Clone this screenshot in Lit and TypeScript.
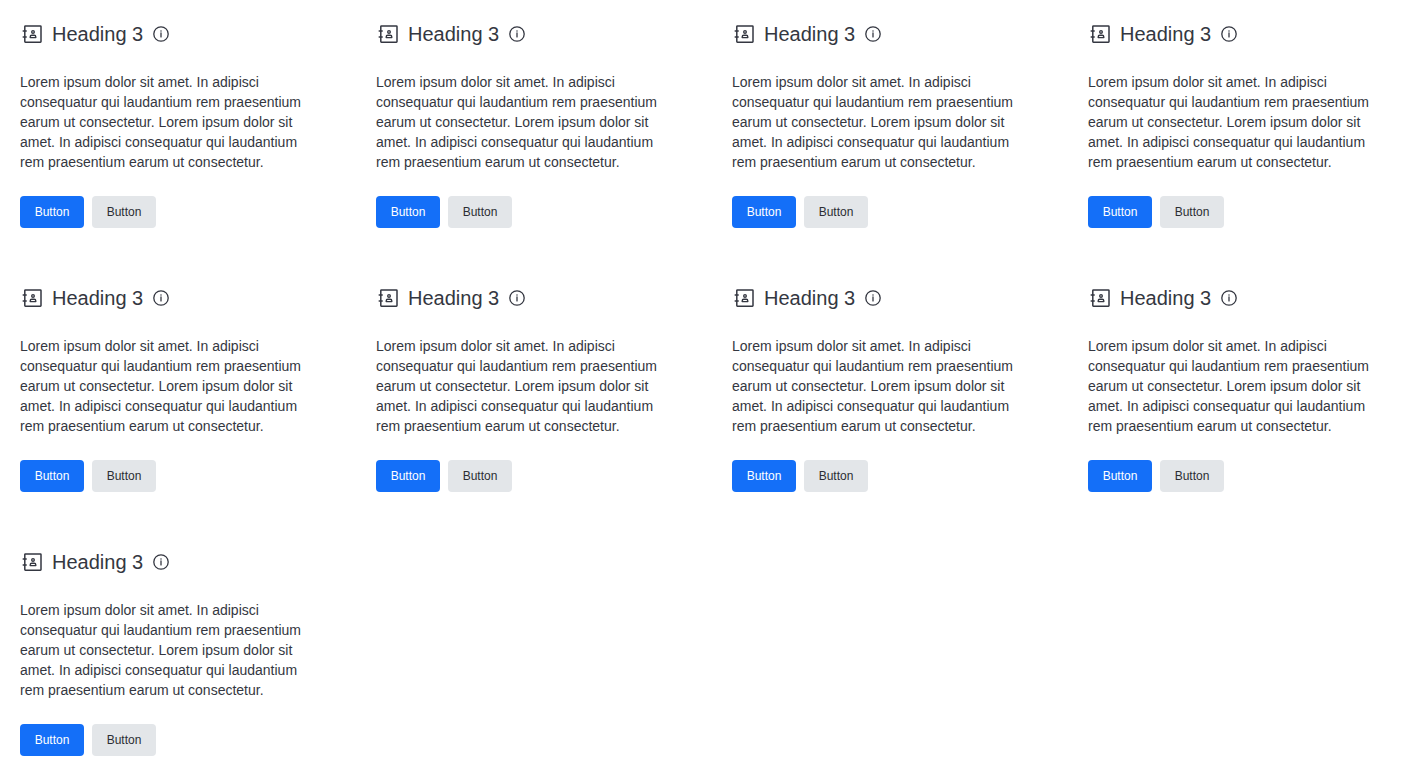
import { LitElement, html, css } from "lit";
import { customElement, property } from "lit/decorators.js";

const FONT = css`"Liberation Sans", Arial, sans-serif`;

@customElement("info-card")
export class InfoCard extends LitElement {
  static styles = css`
    :host {
      display: flex;
      flex-direction: column;
      gap: 24px;
      padding: 20px;
      color: #343741;
      font-family: ${FONT};
    }
    .header {
      display: flex;
      align-items: center;
      gap: 8px;
    }
    .icon {
      display: block;
      flex: none;
      fill: none;
      stroke: currentColor;
      stroke-linecap: round;
      stroke-linejoin: round;
    }
    .title {
      margin: 0;
      font-size: 20px;
      line-height: 28px;
      font-weight: 400;
    }
    .info {
      padding: 0;
      border: 0;
      background: none;
      color: inherit;
      cursor: pointer;
    }
    .text {
      margin: 0;
      font-size: 14px;
      line-height: 20px;
    }
    .actions {
      display: flex;
      gap: 8px;
    }
    .button {
      height: 32px;
      min-width: 64px;
      padding: 0 12px;
      border: 0;
      border-radius: 4px;
      background: #e3e6e9;
      color: #2b2d33;
      font-family: inherit;
      font-size: 12px;
      line-height: 16px;
      cursor: pointer;
    }
    .primary {
      background: #146ff8;
      color: #fff;
    }
  `;

  @property() heading = "";
  @property() text = "";

  render() {
    return html`
      <div class="header">
        <svg class="icon" width="24" height="24" viewBox="0 0 24 24" stroke-width="1.5" aria-hidden="true">
          <rect x="4.8" y="4" width="16.2" height="16.2" rx="0.6" />
          <path d="M3.2 9h3M3.2 15h3" />
          <circle cx="13" cy="9.9" r="1.3" stroke-width="1.4" />
          <path d="M10.2 15.6v-.7c0-1 .7-1.7 1.6-1.7h2.4c.9 0 1.6.7 1.6 1.7v.7z" stroke-width="1.4" />
        </svg>
        <h3 class="title">${this.heading}</h3>
        <button class="info" type="button" aria-label="More information">
          <svg class="icon" width="20" height="20" viewBox="0 0 20 20" stroke-width="1.3">
            <circle cx="10" cy="10" r="7.2" />
            <path d="M10 8.9v4" />
            <circle cx="10" cy="6.9" r="0.75" fill="currentColor" stroke="none" />
          </svg>
        </button>
      </div>
      <p class="text">${this.text}</p>
      <div class="actions">
        <button class="button primary" type="button">Button</button>
        <button class="button" type="button">Button</button>
      </div>
    `;
  }
}

const TEXT =
  "Lorem ipsum dolor sit amet. In adipisci consequatur qui laudantium rem praesentium earum ut consectetur. " +
  "Lorem ipsum dolor sit amet. In adipisci consequatur qui laudantium rem praesentium earum ut consectetur.";

const CARDS = Array.from({ length: 9 }, () => ({ heading: "Heading 3", text: TEXT }));

@customElement("app-root")
export class AppRoot extends LitElement {
  static styles = css`
    :host {
      display: block;
      background: #fff;
    }
    .grid {
      display: grid;
      grid-template-columns: repeat(auto-fill, minmax(320px, 1fr));
      gap: 16px;
    }
  `;

  render() {
    return html`
      <main class="grid">
        ${CARDS.map((c) => html`<info-card .heading=${c.heading} .text=${c.text}></info-card>`)}
      </main>
    `;
  }
}
